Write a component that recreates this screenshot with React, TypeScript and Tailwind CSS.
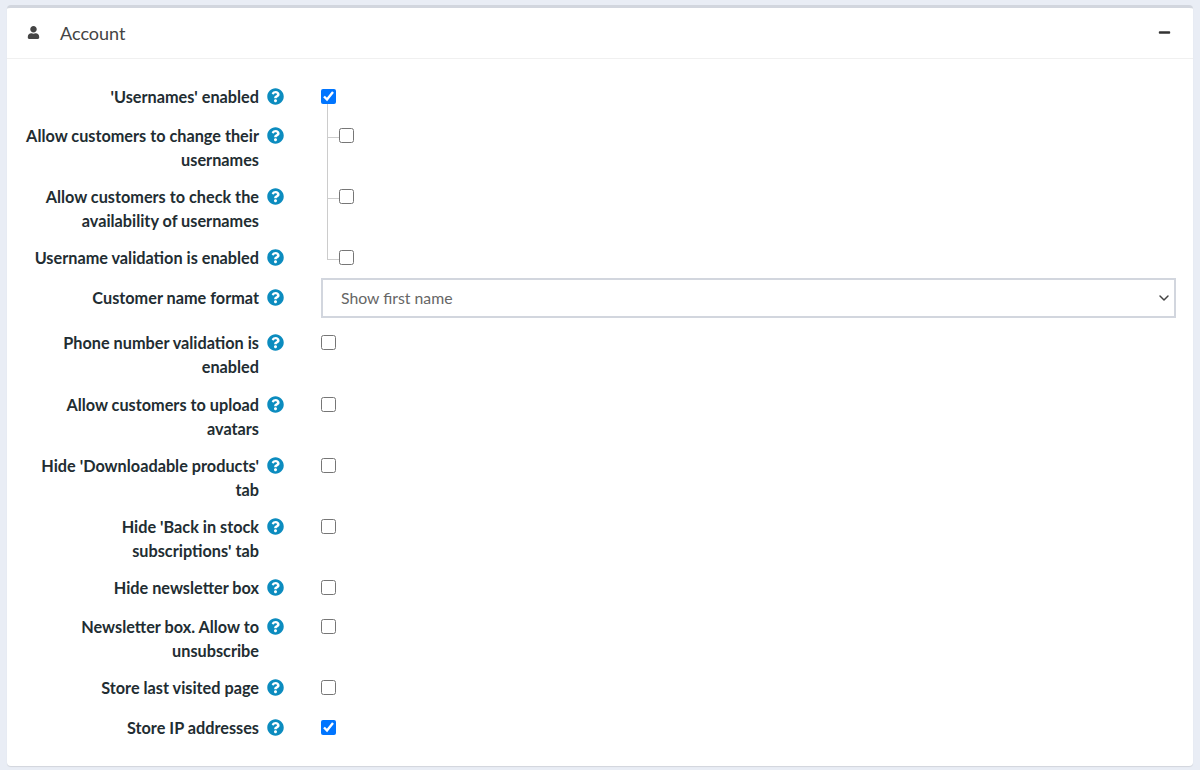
import { FaQuestionCircle, FaUser, FaMinus } from 'react-icons/fa'
import { ChevronDown } from 'lucide-react'

type Row = {
  label: string
  height: string
  checked?: boolean
  nested?: 'middle' | 'last'
  parent?: boolean
}

const rowsTop: Row[] = [
  { label: "'Usernames' enabled", height: 'h-[39px]', checked: true, parent: true },
  { label: 'Allow customers to change their usernames', height: 'h-[61px]', nested: 'middle' },
  { label: 'Allow customers to check the availability of usernames', height: 'h-[61px]', nested: 'middle' },
  { label: 'Username validation is enabled', height: 'h-[32px]', nested: 'last' },
]

const rowsBottom: Row[] = [
  { label: 'Phone number validation is enabled', height: 'h-[62px]' },
  { label: 'Allow customers to upload avatars', height: 'h-[61px]' },
  { label: "Hide 'Downloadable products' tab", height: 'h-[61px]' },
  { label: "Hide 'Back in stock subscriptions' tab", height: 'h-[61px]' },
  { label: 'Hide newsletter box', height: 'h-[39px]' },
  { label: 'Newsletter box. Allow to unsubscribe', height: 'h-[61px]' },
  { label: 'Store last visited page', height: 'h-[40px]' },
  { label: 'Store IP addresses', height: 'h-[39px]', checked: true },
]

function Label({ text }: { text: string }) {
  return (
    <div className="flex w-[277px] shrink-0 items-start justify-end gap-2">
      <span className="w-[236px] text-right text-[16.25px] font-bold leading-6 text-[#222d32]">{text}</span>
      <FaQuestionCircle className="mt-[3px] shrink-0 text-[17px] text-[#0c8cbf]" />
    </div>
  )
}

function Box({ checked }: { checked?: boolean }) {
  return <input type="checkbox" defaultChecked={checked} className="m-0 h-[15px] w-[15px] shrink-0 accent-[#0075ff]" />
}

function FormRow({ row }: { row: Row }) {
  return (
    <div className={`flex ${row.height}`}>
      <Label text={row.label} />
      <div className="ml-[37px] flex flex-1">
        {row.nested ? (
          <>
            <div className={`ml-[6px] w-[12px] border-l border-[#cccccc] ${row.nested === 'last' ? 'h-[14px]' : 'h-full'}`}>
              <div className="h-[14px] border-b border-[#cccccc]" />
            </div>
            <div className="flex pt-[4px]">
              <Box />
            </div>
          </>
        ) : (
          <div className="flex flex-col pt-[4px]">
            <Box checked={row.checked} />
            {row.parent && <div className="ml-[6px] w-px flex-1 bg-[#cccccc]" />}
          </div>
        )}
      </div>
    </div>
  )
}

export default function App() {
  return (
    <div className="h-[770px] w-[1200px] overflow-hidden bg-[#e9edf5] pl-[7px] pr-[7px] pt-[5px] font-['Lato',sans-serif]">
      <div className="h-[761px] rounded-[4px] border-t-[3px] border-[#d2d6de] bg-white shadow-[0_1px_1px_rgba(0,0,0,0.1)]">
        {/* Header */}
        <div className="flex h-[51px] items-center justify-between border-b border-[#f0f0f0] pl-[20px] pr-[22px]">
          <div className="flex items-center">
            <FaUser className="mb-[2px] text-[13px] text-[#444444]" />
            <span className="ml-[20px] text-[18px] text-[#444444]">Account</span>
          </div>
          <FaMinus className="mb-[2px] text-[13px] text-[#333333]" />
        </div>

        {/* Form rows */}
        <div className="pt-[26px]">
          {rowsTop.map(row => <FormRow key={row.label} row={row} />)}

          <div className="flex h-[53px]">
            <div className="flex h-[40px] items-center">
              <Label text="Customer name format" />
            </div>
            <div className="ml-[37px] flex h-[40px] w-[855px] items-center justify-between border-2 border-[#d2d6de] pl-[18px] pr-[2px] text-[15.8px] text-[#666666]">
              <span>Show first name</span>
              <ChevronDown className="h-[16px] w-[16px] text-[#444444]" strokeWidth={2.2} />
            </div>
          </div>

          {rowsBottom.map(row => <FormRow key={row.label} row={row} />)}
        </div>
      </div>
    </div>
  )
}
